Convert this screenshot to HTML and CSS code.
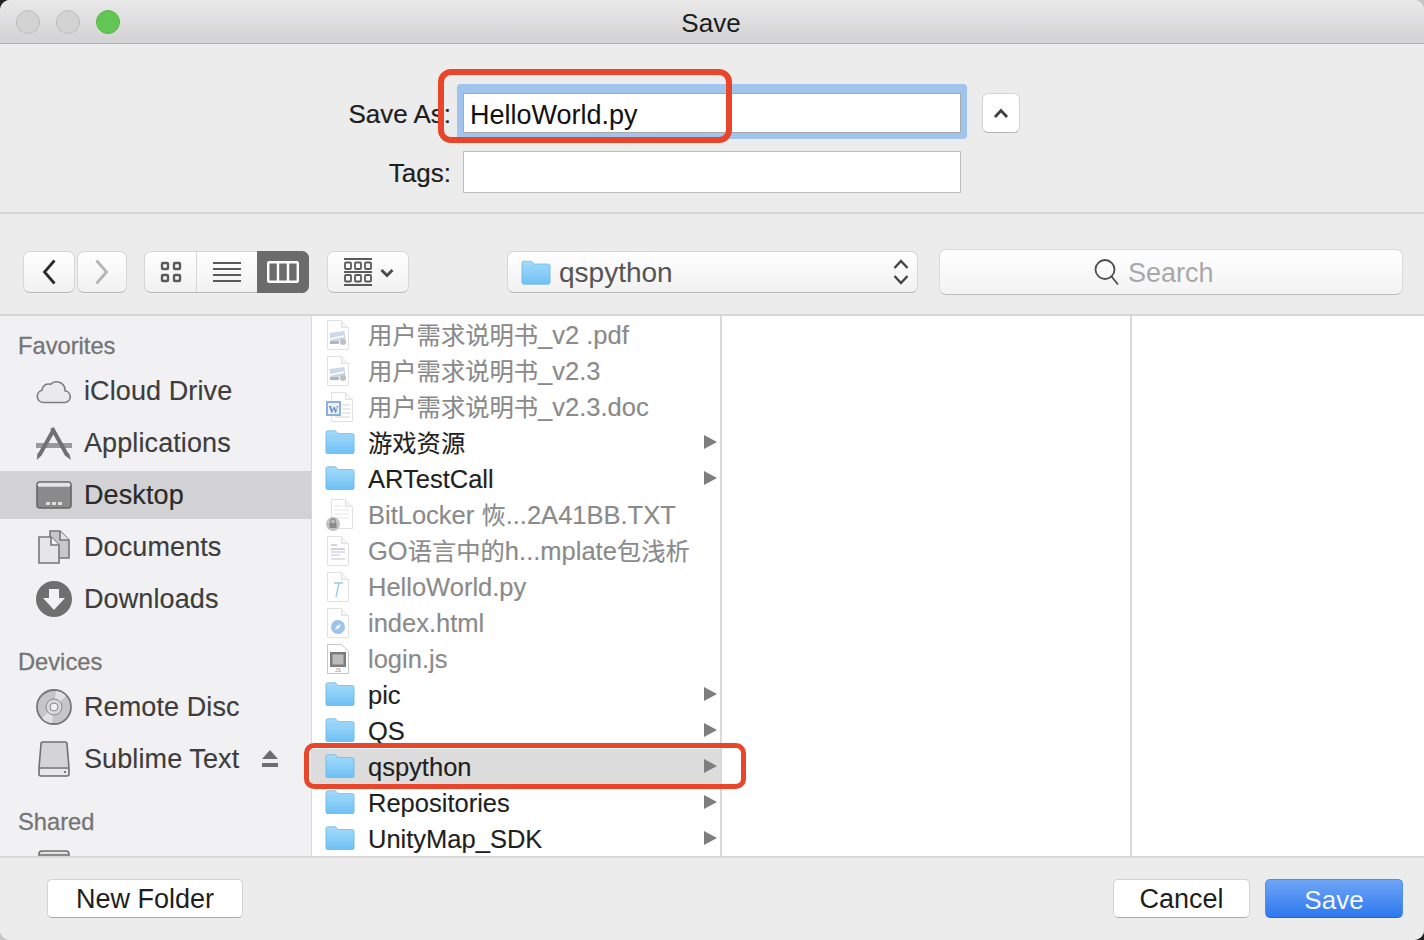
FILE: index.html
```html
<!DOCTYPE html>
<html lang="en">
<head>
<meta charset="utf-8">
<title>Save</title>
<link rel="stylesheet" href="styles.css">
</head>
<body>
<svg class="defs" width="0" height="0" aria-hidden="true">
  <defs>
    <linearGradient id="fg" x1="0" y1="0" x2="0" y2="1"><stop offset="0" stop-color="#a5dcfb"/><stop offset="1" stop-color="#6fc0f4"/></linearGradient>
    <symbol id="folder" viewBox="0 0 32 26">
      <path d="M1 23.5V3a2 2 0 0 1 2-2h7.5a2 2 0 0 1 1.6.8L13.500 4H29a2 2 0 0 1 2 2v17.500a2 2 0 0 1-2 2H3a2 2 0 0 1-2-2z" fill="url(#fg)" stroke="#69b5e6" stroke-width=".8"/>
      <path d="M1 7h30" stroke="#8fd0f5" stroke-width="1"/>
    </symbol>
    <symbol id="page" viewBox="0 0 26 32">
      <path d="M2.500 1.500h14l7 7v22h-21z" fill="#fff" stroke="#dcdcdc"/>
      <path d="M16.500 1.500v7h7" fill="#f3f3f3" stroke="#dcdcdc"/>
    </symbol>
    <symbol id="preview" viewBox="0 0 26 32">
      <use href="#page" width="26" height="32"/>
      <rect x="5" y="13" width="15" height="9" fill="#c3d3e4" transform="rotate(-8 12 17)"/>
      <path d="M5 20l14-3" stroke="#fff" stroke-width="1.500"/>
      <circle cx="18" cy="23" r="3" fill="#b5b5b5"/>
      <rect x="5" y="22" width="9" height="3" fill="#a9a9b0"/>
    </symbol>
  </defs>
</svg>
<div class="window">
  <header class="titlebar">
    <div class="lights">
      <span class="light"></span>
      <span class="light"></span>
      <span class="light light-green"></span>
    </div>
    <div class="title">Save</div>
  </header>

  <section class="form">
    <label class="form-label">Save As:</label>
    <div class="field field-focus">HelloWorld.py</div>
    <button class="collapse" type="button" aria-label="Collapse">
      <svg width="16" height="10" viewBox="0 0 16 10"><path d="M2 9l6-6.500L14 9" fill="none" stroke="#3f3f3f" stroke-width="2.800"/></svg>
    </button>
    <label class="form-label">Tags:</label>
    <div class="field"></div>
  </section>

  <section class="toolbar">
    <div class="nav-group">
      <button class="tool nav" type="button" aria-label="Back">
        <svg width="14" height="26" viewBox="0 0 14 26"><path d="M12.500 1.500L2.500 13l10 11.500" fill="none" stroke="#2c2c2c" stroke-width="2.800"/></svg>
      </button>
      <button class="tool nav" type="button" aria-label="Forward">
        <svg width="14" height="26" viewBox="0 0 14 26"><path d="M1.500 1.500L11.500 13l-10 11.500" fill="none" stroke="#b5b5b5" stroke-width="2.800"/></svg>
      </button>
    </div>
    <div class="views">
      <button class="view view-icons" type="button" aria-label="Icons">
        <svg width="22" height="22" viewBox="0 0 22 22" fill="none" stroke="#5a5a5a" stroke-width="2.400"><rect x="2" y="2" width="6" height="6" rx="1"/><rect x="14" y="2" width="6" height="6" rx="1"/><rect x="2" y="14" width="6" height="6" rx="1"/><rect x="14" y="14" width="6" height="6" rx="1"/></svg>
      </button>
      <button class="view view-list" type="button" aria-label="List">
        <svg width="28" height="22" viewBox="0 0 28 22" stroke="#5a5a5a" stroke-width="2"><path d="M0 2h28M0 8h28M0 14h28M0 20h28"/></svg>
      </button>
      <button class="view view-columns" type="button" aria-label="Columns">
        <svg width="32" height="22" viewBox="0 0 32 22" fill="none" stroke="#fff" stroke-width="2.400"><rect x="1.200" y="1.200" width="29.600" height="19.600" rx="1"/><path d="M11 1v20M21 1v20"/></svg>
      </button>
    </div>
    <button class="tool arrange" type="button" aria-label="Arrange">
      <svg width="28" height="28" viewBox="0 0 28 28" fill="none" stroke="#5a5a5a"><path d="M0 1h28M0 14h28M0 27h28" stroke-width="1.800"/><g stroke-width="1.800"><rect x="1" y="4.500" width="6" height="6.500" rx="1"/><rect x="11" y="4.500" width="6" height="6.500" rx="1"/><rect x="21" y="4.500" width="6" height="6.500" rx="1"/><rect x="1" y="17" width="6" height="6.500" rx="1"/><rect x="11" y="17" width="6" height="6.500" rx="1"/><rect x="21" y="17" width="6" height="6.500" rx="1"/></g></svg>
      <svg class="arrange-caret" width="14" height="10" viewBox="0 0 14 10"><path d="M1.500 2L7 7.500 12.500 2" fill="none" stroke="#4a4a4a" stroke-width="3"/></svg>
    </button>
    <button class="tool path" type="button">
      <svg class="path-folder" width="30" height="25"><use href="#folder"/></svg>
      <span class="path-name">qspython</span>
      <svg class="path-arrows" width="18" height="28" viewBox="0 0 18 28" fill="none" stroke="#444" stroke-width="2.400"><path d="M2.500 10L9 3l6.500 7M2.500 18L9 25l6.500-7"/></svg>
    </button>
    <div class="search">
      <svg width="26" height="28" viewBox="0 0 26 28" fill="none" stroke="#4d4d4d" stroke-width="1.800"><circle cx="11" cy="11.500" r="9.500"/><path d="M17.500 18.500l6.500 8"/></svg>
      <span class="search-text">Search</span>
    </div>
  </section>

  <main class="browser">
    <nav class="sidebar">
      <h2 class="side-head">Favorites</h2>
      <div class="side-item">
        <svg class="side-icon" width="36" height="26" viewBox="0 0 36 26"><path d="M7.500 24.500a6.200 6.200 0 0 1-1.500-12.200 6.500 6.500 0 0 1 8.500-6A8.500 8.500 0 0 1 29 11.500c0 .5 0 1 0 1.300a5.900 5.900 0 0 1 .2 11.700z" fill="#eaeaec" stroke="#7c7c7c" stroke-width="1.600"/></svg>
        <span>iCloud Drive</span>
      </div>
      <div class="side-item">
        <svg class="side-icon" width="36" height="33" viewBox="0 0 36 33" fill="none"><path d="M0 16h36v5H0z" fill="#9a9a9c"/><path d="M17.500 3L3.500 28" stroke="#717171" stroke-width="4"/><path d="M16 1l15 27" stroke="#717171" stroke-width="4"/><path d="M1.500 26l4 2.500L.8 33zM33 26l-4 2.500 6 4.500z" fill="#717171"/></svg>
        <span>Applications</span>
      </div>
      <div class="side-item is-selected">
        <svg class="side-icon" width="36" height="28" viewBox="0 0 36 28"><rect x="1" y="1" width="34" height="26" rx="3" fill="#8a8a8a" stroke="#666" stroke-width="1.600"/><rect x="1.800" y="1.800" width="32.400" height="4" rx="1.500" fill="#e4e4e6"/><path d="M10 21h4v3h-4zM16 21h4v3h-4zM22 21h4v3h-4z" fill="#ddd"/></svg>
        <span>Desktop</span>
      </div>
      <div class="side-item">
        <svg class="side-icon" width="36" height="34" viewBox="0 0 36 34"><path d="M14 1h10l9 9v18H14z" fill="#c7c7c9" stroke="#777" stroke-width="1.600"/><path d="M24 1v9h9" fill="#e4e4e6" stroke="#777" stroke-width="1.600"/><path d="M3 7h12l8 8v18H3z" fill="#e6e6e8" stroke="#777" stroke-width="1.600"/><path d="M15 7v8h8" fill="#f3f3f5" stroke="#777" stroke-width="1.600"/></svg>
        <span>Documents</span>
      </div>
      <div class="side-item">
        <svg class="side-icon" width="36" height="36" viewBox="0 0 36 36"><circle cx="18" cy="18" r="18" fill="#6f6f6f"/><path d="M13 8h10v9h6L18 29 7 17h6z" fill="#f2f2f4"/></svg>
        <span>Downloads</span>
      </div>

      <h2 class="side-head side-head-next">Devices</h2>
      <div class="side-item">
        <svg class="side-icon" width="36" height="36" viewBox="0 0 36 36"><circle cx="18" cy="18" r="17" fill="#c6c6c8" stroke="#767676" stroke-width="1.800"/><path d="M18 18L6 29a16 16 0 0 0 10 5zM18 18L30 7a16 16 0 0 0-10-5z" fill="#e2e2e4"/><circle cx="18" cy="18" r="8" fill="#d8d8da" stroke="#8a8a8a"/><circle cx="18" cy="18" r="4" fill="#f0f0f2" stroke="#8a8a8a"/></svg>
        <span>Remote Disc</span>
      </div>
      <div class="side-item">
        <svg class="side-icon" width="36" height="36" viewBox="0 0 36 36"><path d="M7 1h22a2 2 0 0 1 2 2l2 24v6a2 2 0 0 1-2 2H5a2 2 0 0 1-2-2v-6L5 3a2 2 0 0 1 2-2z" fill="#d4d4d6" stroke="#707070" stroke-width="1.600"/><path d="M3 27h30" stroke="#707070" stroke-width="1.400"/><path d="M4 28h28v6H4z" fill="#e8e8ea"/><circle cx="29" cy="31" r="1" fill="#555"/></svg>
        <span>Sublime Text</span>
        <svg class="eject" width="16" height="18" viewBox="0 0 16 18" fill="#6e6e6e"><path d="M8 0l8 9H0z"/><rect y="13" width="16" height="4"/></svg>
      </div>

      <h2 class="side-head side-head-next">Shared</h2>
      <div class="side-item">
        <svg class="side-icon" width="36" height="34" viewBox="0 0 36 34"><rect x="3" y="1" width="30" height="30" rx="3" fill="#e2e2e4" stroke="#6f6f6f" stroke-width="1.600"/><rect x="4" y="4" width="28" height="24" fill="#8a8a8a"/></svg>
      </div>
    </nav>

    <div class="column column-files">
      <div class="row is-dim"><svg class="file-icon" width="26" height="32"><use href="#preview"/></svg><span><span class="cjk">用户需求说明书</span>_v2 .pdf</span></div>
      <div class="row is-dim"><svg class="file-icon" width="26" height="32"><use href="#preview"/></svg><span><span class="cjk">用户需求说明书</span>_v2.3</span></div>
      <div class="row is-dim">
        <svg class="file-icon" width="30" height="32" viewBox="0 0 30 32"><path d="M6.500 1.500h14l7 7v22h-21z" fill="#fff" stroke="#dcdcdc"/><path d="M20.500 1.500v7h7" fill="#f3f3f3" stroke="#dcdcdc"/><path d="M17 14h8M17 18h8M17 22h8M10 26h15" stroke="#cfcfcf"/><rect x="1" y="10" width="15" height="15" fill="#7ba3d9"/><rect x="3" y="12" width="11" height="11" fill="#eaf1fa"/><text class="word-w" x="8.500" y="21.500" text-anchor="middle">W</text></svg>
        <span><span class="cjk">用户需求说明书</span>_v2.3.doc</span>
      </div>
      <div class="row"><svg class="file-icon folder-icon" width="30" height="25"><use href="#folder"/></svg><span><span class="cjk">游戏资源</span></span><i class="disclosure"></i></div>
      <div class="row"><svg class="file-icon folder-icon" width="30" height="25"><use href="#folder"/></svg><span>ARTestCall</span><i class="disclosure"></i></div>
      <div class="row is-dim">
        <svg class="file-icon" width="30" height="34" viewBox="0 0 30 34"><path d="M6.500 1.500h14l7 7v22h-21z" fill="#fff" stroke="#dcdcdc"/><path d="M20.500 1.500v7h7" fill="#f3f3f3" stroke="#dcdcdc"/><path d="M9 8h9M9 12h15M9 16h15M9 20h15" stroke="#e2e2e2"/><circle cx="8" cy="26" r="7" fill="#b8b8b8"/><rect x="4.500" y="25" width="7" height="5" fill="#777"/><path d="M5.800 25v-2a2.200 2.200 0 0 1 4.400 0v2" fill="none" stroke="#777" stroke-width="1.200"/></svg>
        <span>BitLocker <span class="cjk">恢</span>...2A41BB.TXT</span>
      </div>
      <div class="row is-dim">
        <svg class="file-icon" width="26" height="32" viewBox="0 0 26 32"><use href="#page" width="26" height="32"/><path d="M6 10h6M6 14h14" stroke="#9a9a9a"/><path d="M6 17h14" stroke="#c9a8c5"/><path d="M6 20h9" stroke="#9ec3e0"/><path d="M6 24h14" stroke="#b9b9b9"/></svg>
        <span>GO<span class="cjk">语言中的</span>h...mplate<span class="cjk">包浅析</span></span>
      </div>
      <div class="row is-dim">
        <svg class="file-icon" width="26" height="32" viewBox="0 0 26 32"><use href="#page" width="26" height="32"/><path d="M9 12h9M14 12l-3 14" fill="none" stroke="#8cc2ea" stroke-width="1.400"/></svg>
        <span>HelloWorld.py</span>
      </div>
      <div class="row is-dim">
        <svg class="file-icon" width="26" height="32" viewBox="0 0 26 32"><use href="#page" width="26" height="32"/><circle cx="13" cy="20" r="7" fill="#8db8e8"/><path d="M16 17l-4.500 2-1.500 4 4.500-2z" fill="#e9f1fb"/></svg>
        <span>index.html</span>
      </div>
      <div class="row is-dim">
        <svg class="file-icon" width="26" height="32" viewBox="0 0 26 32"><path d="M2.500 1.500h14l7 7v22h-21z" fill="#fff" stroke="#bdbdbd"/><rect x="5" y="9" width="16" height="15" fill="#666"/><rect x="7.500" y="11.500" width="11" height="10" fill="#b0b0b0"/><text class="js-tag" x="13" y="29" text-anchor="middle">JS</text></svg>
        <span>login.js</span>
      </div>
      <div class="row"><svg class="file-icon folder-icon" width="30" height="25"><use href="#folder"/></svg><span>pic</span><i class="disclosure"></i></div>
      <div class="row"><svg class="file-icon folder-icon" width="30" height="25"><use href="#folder"/></svg><span>QS</span><i class="disclosure"></i></div>
      <div class="row is-current"><svg class="file-icon folder-icon" width="30" height="25"><use href="#folder"/></svg><span>qspython</span><i class="disclosure"></i></div>
      <div class="row"><svg class="file-icon folder-icon" width="30" height="25"><use href="#folder"/></svg><span>Repositories</span><i class="disclosure"></i></div>
      <div class="row"><svg class="file-icon folder-icon" width="30" height="25"><use href="#folder"/></svg><span>UnityMap_SDK</span><i class="disclosure"></i></div>
    </div>
    <div class="column column-empty"></div>
    <div class="column column-last"></div>
  </main>

  <footer class="actions">
    <button class="btn btn-new" type="button">New Folder</button>
    <div class="actions-right">
      <button class="btn btn-cancel" type="button">Cancel</button>
      <button class="btn btn-save" type="button">Save</button>
    </div>
  </footer>

  <div class="callout callout-name"></div>
  <div class="callout callout-folder"></div>
</div>
</body>
</html>
```

FILE: styles.css
```css
* { box-sizing: border-box; }
html, body { margin: 0; padding: 0; }
html { background: linear-gradient(45deg, #c4c4c4 10%, #222 11%, #222 89%, #c4c4c4 90%); }
body { width: 1424px; height: 940px; overflow: hidden; font-family: "Liberation Sans", "Noto Sans CJK SC", sans-serif; }
.defs { position: absolute; }
button { font: inherit; margin: 0; padding: 0; }

.window { position: relative; width: 1424px; height: 940px; display: flex; flex-direction: column; background: #ececec; border-radius: 10px; overflow: hidden; }

.titlebar { height: 44px; flex: none; display: flex; align-items: center; justify-content: center; position: relative; background: linear-gradient(#eae9ea, #d2d1d3); border-bottom: 1px solid #b1b0b1; }
.lights { position: absolute; left: 16px; top: 10px; display: flex; gap: 16px; }
.light { width: 24px; height: 24px; border-radius: 50%; background: #d3d2d3; border: 1px solid #bdbcbd; }
.light-green { background: #62c655; border-color: #58b44c; }
.title { font-size: 26px; color: #1c1c1c; margin: 3px 2px 0 0; }

.form { height: 170px; flex: none; display: grid; grid-template-columns: 451px 498px 38px; grid-template-rows: 40px 42px; column-gap: 12px; row-gap: 18px; padding-top: 49px; align-items: center; border-bottom: 2px solid #d6d6d6; }
.form-label { font-size: 26px; line-height: 40px; padding-top: 2px; color: #1e1e1e; text-align: right; -webkit-text-stroke: .2px #1e1e1e; }
.field { height: 100%; background: #fff; border: 1px solid #bcbcbc; font-size: 27px; line-height: 42px; padding-left: 6px; color: #111; }
.field-focus { border-color: #a9a9a9; box-shadow: 0 -3px 0 6px #a1c4ee, 0 0 0 6px #a1c4ee; border-radius: 1px; }
.collapse { grid-column: 3; margin-left: 9px; height: 40px; width: 38px; display: flex; align-items: center; justify-content: center; background: #fff; border: 1px solid #d4d4d4; border-bottom-color: #b4b4b4; border-radius: 6px; }

.toolbar { height: 102px; flex: none; display: flex; align-items: flex-start; padding: 37px 21px 0 23px; background: #ececec; border-bottom: 2px solid #d6d6d6; }
.tool { display: flex; align-items: center; height: 42px; background: linear-gradient(#fff, #f1f1f1); border: 1px solid #d6d6d6; border-bottom-color: #b9b9b9; border-radius: 7px; }
.nav-group { display: flex; gap: 2px; }
.nav { width: 52px; justify-content: center; }
.nav + .nav { width: 50px; }
.views { margin-left: 17px; width: 165px; height: 42px; display: flex; border: 1px solid #d6d6d6; border-bottom-color: #b9b9b9; border-radius: 7px; background: linear-gradient(#fff, #f1f1f1); }
.view { display: flex; align-items: center; justify-content: center; background: none; border: 0; height: 100%; }
.view-icons { width: 52px; border-right: 1px solid #d6d6d6; }
.view-list { width: 60px; }
.view-columns { flex: 1; margin: -1px -1px -1px 0; height: 42px; background: #6b6b6b; border-radius: 0 7px 7px 0; }
.arrange { margin-left: 18px; width: 82px; padding-left: 1px; justify-content: center; gap: 8px; }
.arrange-caret { margin-top: 2px; }
.path { margin-left: 98px; width: 411px; padding: 0 7px 0 13px; font-size: 28px; color: #555; }
.path-folder { flex: none; }
.path-name { margin: 2px 0 0 8px; flex: 1; text-align: left; }
.search { margin: -2px 0 0 21px; flex: 1; height: 46px; display: flex; align-items: center; gap: 8px; padding-left: 154px; font-size: 27px; color: #a8a8a8; background: linear-gradient(#fff, #f3f3f3); border: 1px solid #dadada; border-bottom-color: #bdbdbd; border-radius: 7px; }
.search-text { margin-top: 2px; }

.browser { flex: 1; min-height: 0; display: flex; background: #fff; overflow: hidden; }
.sidebar { width: 311px; flex: none; display: flex; flex-direction: column; padding-top: 11px; background: #f1f1f3; overflow: hidden; font-size: 27px; letter-spacing: .1px; color: #3d3d3d; -webkit-text-stroke: .15px currentColor; }
.side-head { flex: none; height: 38px; margin: 0; padding-left: 18px; font-size: 23.700px; letter-spacing: 0; font-weight: 400; line-height: 38px; color: #757575; -webkit-text-stroke: .3px #757575; }
.side-head-next { margin-top: 18px; }
.side-item { position: relative; flex: none; height: 48px; margin: 2px 0; padding-left: 36px; display: flex; align-items: center; }
.side-item > span { position: absolute; left: 84px; }
.side-icon { flex: none; }
.is-selected { background: #d2d2d5; color: #2a2a2a; }
.eject { position: absolute; left: 262px; top: 15px; }

.column { flex: none; height: 100%; overflow: hidden; }
.column-files { width: 411px; padding-top: 1px; border-left: 1px solid #d9d9d9; border-right: 2px solid #d9d9d9; }
.column-empty { width: 410px; border-right: 2px solid #d9d9d9; }
.column-last { flex: 1; }

.row { position: relative; height: 36px; font-size: 25.500px; color: #1f1f1f; -webkit-text-stroke: .15px currentColor; }
.is-dim { color: #8a8a8a; }
.is-dim .file-icon { opacity: .85; }
.file-icon { position: absolute; left: 13px; top: 50%; transform: translateY(-50%); }
.folder-icon { margin-top: -1px; }
.row > span { position: absolute; left: 56px; top: 0; line-height: 36px; white-space: nowrap; }
.cjk { font-size: 24.300px; }
.is-current { background: #dcdcdc; }
.disclosure { position: absolute; left: 392px; top: 10px; width: 0; height: 0; border-left: 13px solid #7e7e7e; border-top: 7.500px solid transparent; border-bottom: 7.500px solid transparent; }
.word-w { font-size: 10px; font-family: "Liberation Serif", serif; font-weight: 700; fill: #4a78b8; }
.js-tag { font-size: 5px; fill: #777; }

.actions { height: 84px; flex: none; display: flex; justify-content: space-between; align-items: flex-start; padding: 21px 21px 0 47px; background: #ececec; border-top: 2px solid #d9d9d9; }
.actions-right { display: flex; gap: 15px; }
.btn { height: 39px; padding-top: 2px; font-size: 27px; line-height: 1; background: #fff; color: #1e1e1e; border: 1px solid #d2d2d2; border-bottom-color: #aaa; border-radius: 5px; }
.btn-new { width: 196px; }
.btn-cancel { width: 137px; }
.btn-save { width: 138px; font-size: 26px; color: #f4f8ff; background: linear-gradient(#6ea6f6, #2d77ef); border: 1px solid #4f8fe8; border-bottom-color: #2a66cf; }

.callout { position: absolute; border: 6px solid #e8452a; pointer-events: none; }
.callout-name { left: 438px; top: 69px; width: 294px; height: 74px; border-radius: 13px; }
.callout-folder { left: 304px; top: 743px; width: 442px; height: 46px; border-width: 5px; border-radius: 10px; }
```
